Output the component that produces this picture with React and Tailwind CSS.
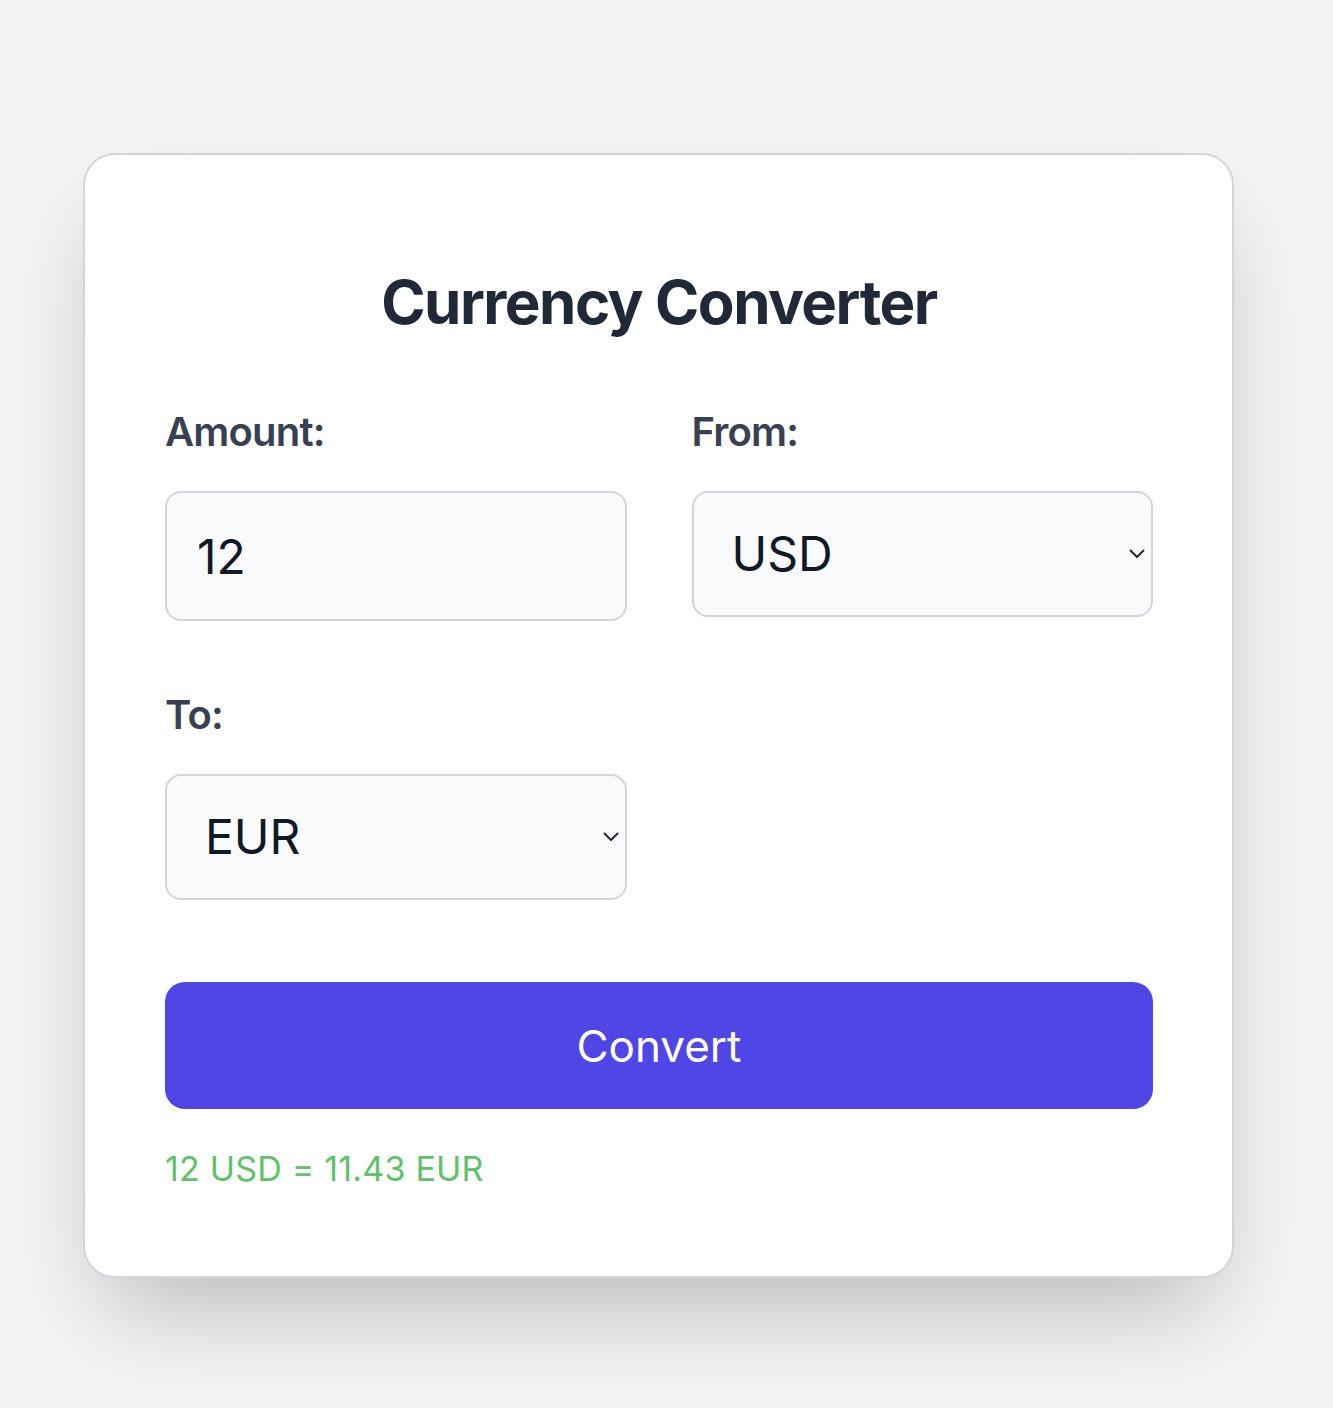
import React from "react";

function Chevron() {
  return (
    <svg
      className="pointer-events-none absolute right-[8px] top-1/2 -translate-y-1/2"
      width="16"
      height="10"
      viewBox="0 0 16 10"
      fill="none"
    >
      <path d="M1.5 1.5 L8 8 L14.5 1.5" stroke="#1f2937" strokeWidth="2" strokeLinecap="round" strokeLinejoin="round" />
    </svg>
  );
}

function Select({ value, options }) {
  return (
    <div className="relative">
      <select
        defaultValue={value}
        className="block h-[126px] w-full appearance-none rounded-[16px] border-2 border-[#d1d5db] bg-[#f9fafb] pl-[38px] pr-[40px] text-[48px] text-[#111827] outline-none"
        style={{ fontFamily: "Inter, 'Noto Sans', sans-serif" }}
      >
        {options.map((o) => (
          <option key={o} value={o}>
            {o}
          </option>
        ))}
      </select>
      <Chevron />
    </div>
  );
}

export default function App() {
  const opts = ["USD", "EUR", "GBP", "JPY"];
  return (
    <div className="min-h-[1408px] bg-[#f3f4f6] pt-[153px] font-['Inter',sans-serif]">
      <div className="ml-[83px] w-[1151px] rounded-[32px] border-2 border-[#d4d5d9] bg-white pl-[80px] pr-[79px] pt-[111px] pb-[83px] shadow-[0_50px_100px_-24px_rgba(0,0,0,0.25)]">
        <h1 className="text-center text-[60px] font-bold leading-[72px] tracking-[-1.5px] text-[#1f2937]">
          Currency Converter
        </h1>
        <div className="mt-[66px] grid grid-cols-2 items-start gap-x-[65px] gap-y-[66px]">
          <div>
            <label className="block text-[40px] font-semibold leading-[56px] tracking-[-0.8px] text-[#374151]">Amount:</label>
            <input
              defaultValue="12"
              className="mt-[31px] block h-[130px] w-full rounded-[16px] border-2 border-[#d1d5db] bg-[#f9fafb] pl-[30px] text-[48px] text-[#111827] outline-none"
            />
          </div>
          <div>
            <label className="block text-[40px] font-semibold leading-[56px] tracking-[-0.8px] text-[#374151]">From:</label>
            <div className="mt-[31px]">
              <Select value="USD" options={opts} />
            </div>
          </div>
          <div>
            <label className="block text-[40px] font-semibold leading-[56px] tracking-[-0.8px] text-[#374151]">To:</label>
            <div className="mt-[31px]">
              <Select value="EUR" options={opts} />
            </div>
          </div>
        </div>
        <button className="mt-[82px] block h-[127px] w-full rounded-[20px] bg-[#4f46e5] text-[44px] text-white">
          Convert
        </button>
        <p className="mt-[36px] text-[34px] leading-[48px] tracking-[0.2px] text-[#5ec269]">12 USD = 11.43 EUR</p>
      </div>
    </div>
  );
}
